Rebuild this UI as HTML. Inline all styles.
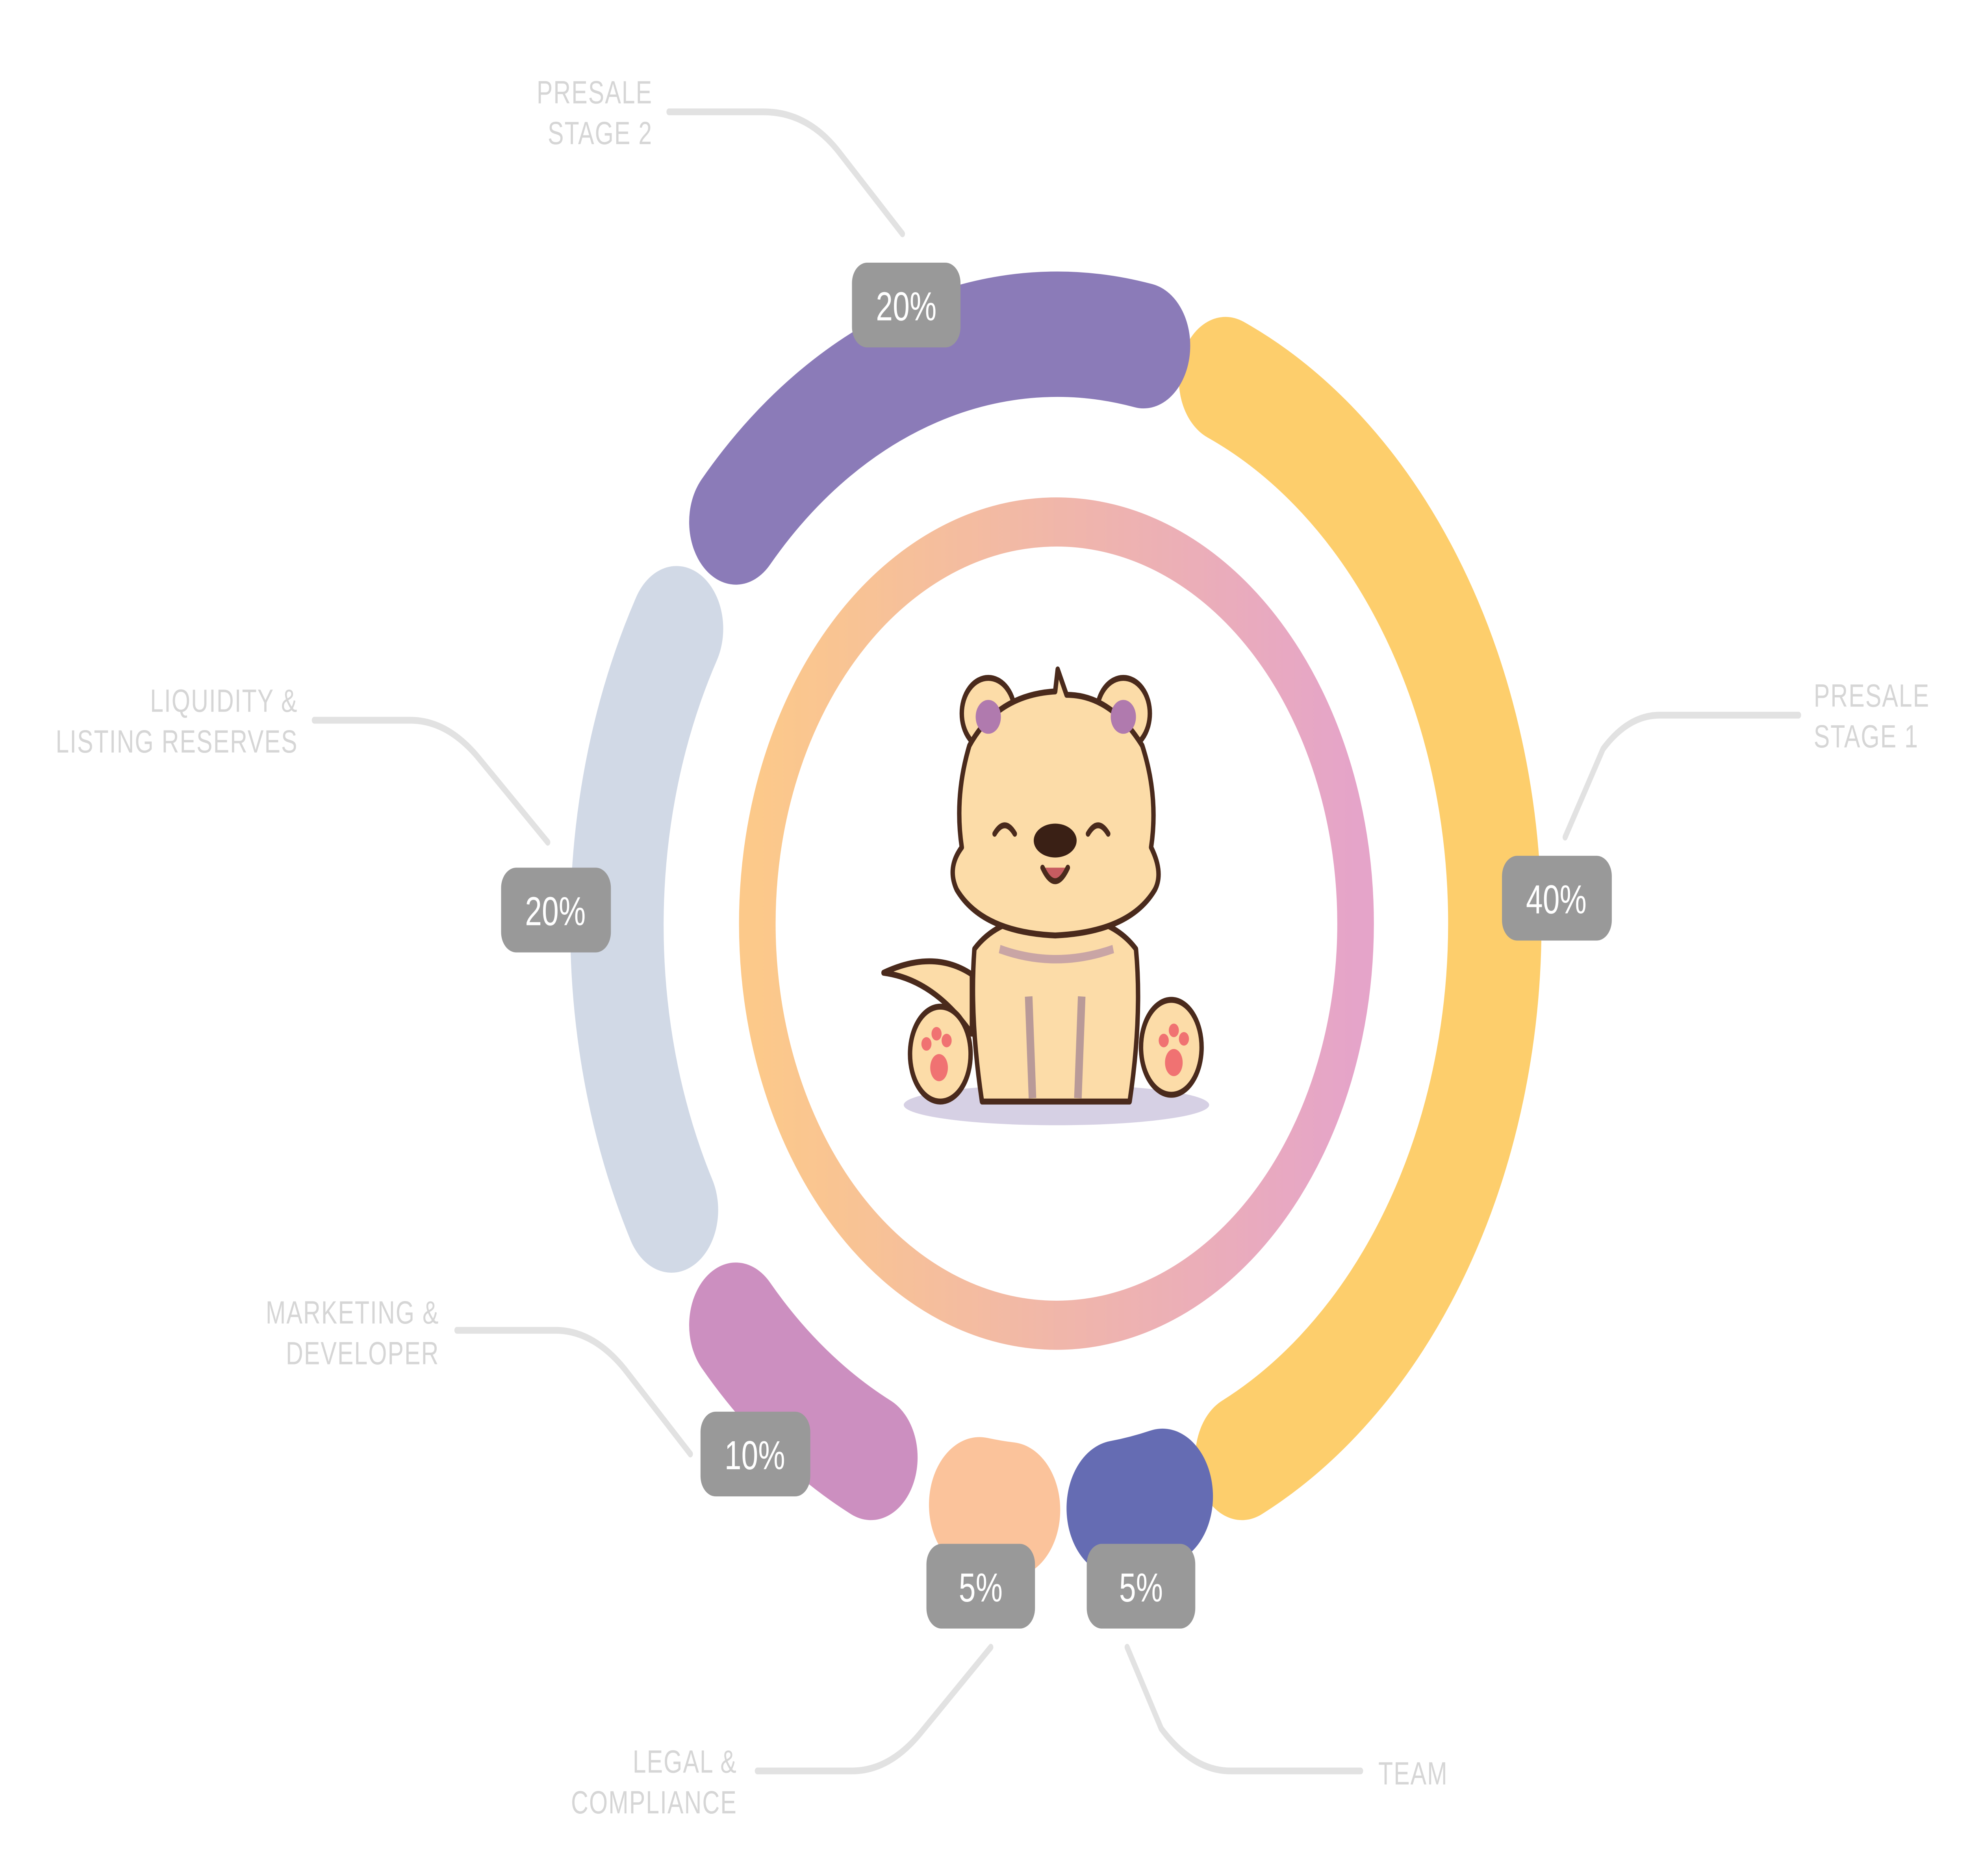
<!DOCTYPE html>
<html><head><meta charset="utf-8"><style>
html,body{margin:0;padding:0;background:#fff;width:100%;height:100%;overflow:hidden}
svg{display:block;width:100vw;height:100vh}
.lb{font-family:"Liberation Sans",sans-serif;font-size:19px;fill:#d6d6d6;letter-spacing:0.6px}
.pc{font-family:"Liberation Sans",sans-serif;font-size:24px;fill:#fff;text-anchor:middle}
</style></head><body>
<svg viewBox="0 0 1560 1107" preserveAspectRatio="none" xmlns="http://www.w3.org/2000/svg">
<defs>
<linearGradient id="g" x1="0" x2="1" y1="0" y2="0">
<stop offset="0" stop-color="#fcc98a"/><stop offset="1" stop-color="#e5a4c9"/>
</linearGradient>
</defs>
<rect width="1560" height="1107" fill="#fff"/>
<g fill="none" stroke-linecap="round" stroke-width="74">
<path d="M971 224 A348 348 0 0 1 984 860" stroke="#fdce6c"/>
<path d="M583 308 A348 348 0 0 1 906 204" stroke="#8b7bb8"/>
<path d="M532 714 A348 348 0 0 1 536 371" stroke="#d1d9e6"/>
<path d="M690 860 A348 348 0 0 1 583 782" stroke="#cc8fc0"/>
<path d="M800 891 A348 348 0 0 1 776 888" stroke="#fbc39b" stroke-width="80"/>
<path d="M921 883 A348 348 0 0 1 885 890" stroke="#656cb3" stroke-width="80"/>
</g>
<circle cx="837" cy="545" r="237" fill="none" stroke="url(#g)" stroke-width="29"/>
<g fill="none" stroke="#e2e2e2" stroke-width="4" stroke-linecap="round">
<path d="M530 66 H605 Q640 66 665 90 L715 138"/>
<path d="M1425 422 H1315 Q1290 422 1270 442 L1240 494"/>
<path d="M249 425 H325 Q355 425 380 448 L434 497"/>
<path d="M362 785 H440 Q470 785 495 808 L547 858"/>
<path d="M600 1045 H675 Q705 1045 730 1022 L785 972"/>
<path d="M1078 1045 H975 Q945 1045 920 1020 L893 972"/>
</g>
<g class="lb">
<text x="517" y="61" text-anchor="end">PRESALE</text><text x="517" y="85" text-anchor="end">STAGE 2</text>
<text x="1437" y="417">PRESALE</text><text x="1437" y="441">STAGE 1</text>
<text x="236" y="420" text-anchor="end">LIQUIDITY &amp;</text><text x="236" y="444" text-anchor="end">LISTING RESERVES</text>
<text x="348" y="781" text-anchor="end">MARKETING &amp;</text><text x="348" y="805" text-anchor="end">DEVELOPER</text>
<text x="584" y="1046" text-anchor="end">LEGAL &amp;</text><text x="584" y="1070" text-anchor="end">COMPLIANCE</text>
<text x="1092" y="1053">TEAM</text>
</g>
<g fill="#999">
<rect x="675" y="155" width="86" height="50" rx="12"/>
<rect x="1190" y="505" width="87" height="50" rx="12"/>
<rect x="397" y="512" width="87" height="50" rx="12"/>
<rect x="555" y="833" width="87" height="50" rx="12"/>
<rect x="734" y="911" width="86" height="50" rx="12"/>
<rect x="861" y="911" width="86" height="50" rx="12"/>
</g>
<g class="pc">
<text x="718" y="189">20%</text>
<text x="1233" y="539">40%</text>
<text x="440" y="546">20%</text>
<text x="598" y="867">10%</text>
<text x="777" y="945">5%</text>
<text x="904" y="945">5%</text>
</g>
<ellipse cx="837" cy="652" rx="121" ry="12" fill="#d6d0e4"/>
<g stroke="#4a2a1c" stroke-width="3.5" stroke-linejoin="round" stroke-linecap="round">
<path d="M770 575 Q740 560 700 574 Q740 578 770 610 Z" fill="#fcdca8"/>
<circle cx="783" cy="421" r="21" fill="#fcdca8"/>
<circle cx="890" cy="421" r="21" fill="#fcdca8"/>
<path d="M772 560 Q768 600 778 650 L895 650 Q905 600 900 560 Q880 540 836 540 Q792 540 772 560 Z" fill="#fcdca8"/>
<ellipse cx="745" cy="622" rx="24" ry="28" fill="#fcdca8"/>
<ellipse cx="928" cy="618" rx="24" ry="28" fill="#fcdca8"/>
<path d="M768 440 Q790 410 836 408 L838 395 L845 410 Q880 410 905 440 Q918 470 912 500 Q922 515 915 525 Q895 550 836 552 Q778 550 758 525 Q750 512 762 500 Q756 470 768 440 Z" fill="#fcdca8"/>
<path d="M788 492 Q796 482 804 492 M862 492 Q870 482 878 492" fill="none"/>
<path d="M826 512 Q836 528 846 512" fill="#c75c60"/>
</g>
<circle cx="783" cy="423" r="10" fill="#b07aae"/>
<circle cx="890" cy="423" r="10" fill="#b07aae"/>
<ellipse cx="836" cy="496" rx="17" ry="10" fill="#3a2015"/>
<g fill="#f07272">
<ellipse cx="744" cy="630" rx="7" ry="8"/><circle cx="734" cy="616" r="4"/><circle cx="742" cy="610" r="4"/><circle cx="750" cy="614" r="4"/>
<ellipse cx="930" cy="627" rx="7" ry="8"/><circle cx="922" cy="614" r="4"/><circle cx="930" cy="608" r="4"/><circle cx="938" cy="613" r="4"/>
</g>
<path d="M815 588 L818 648 M857 588 L854 648" stroke="#b99a98" stroke-width="6"/>
<path d="M792 560 Q836 572 882 560" stroke="#c9a5a5" stroke-width="5" fill="none"/>
</svg>
</body></html>
